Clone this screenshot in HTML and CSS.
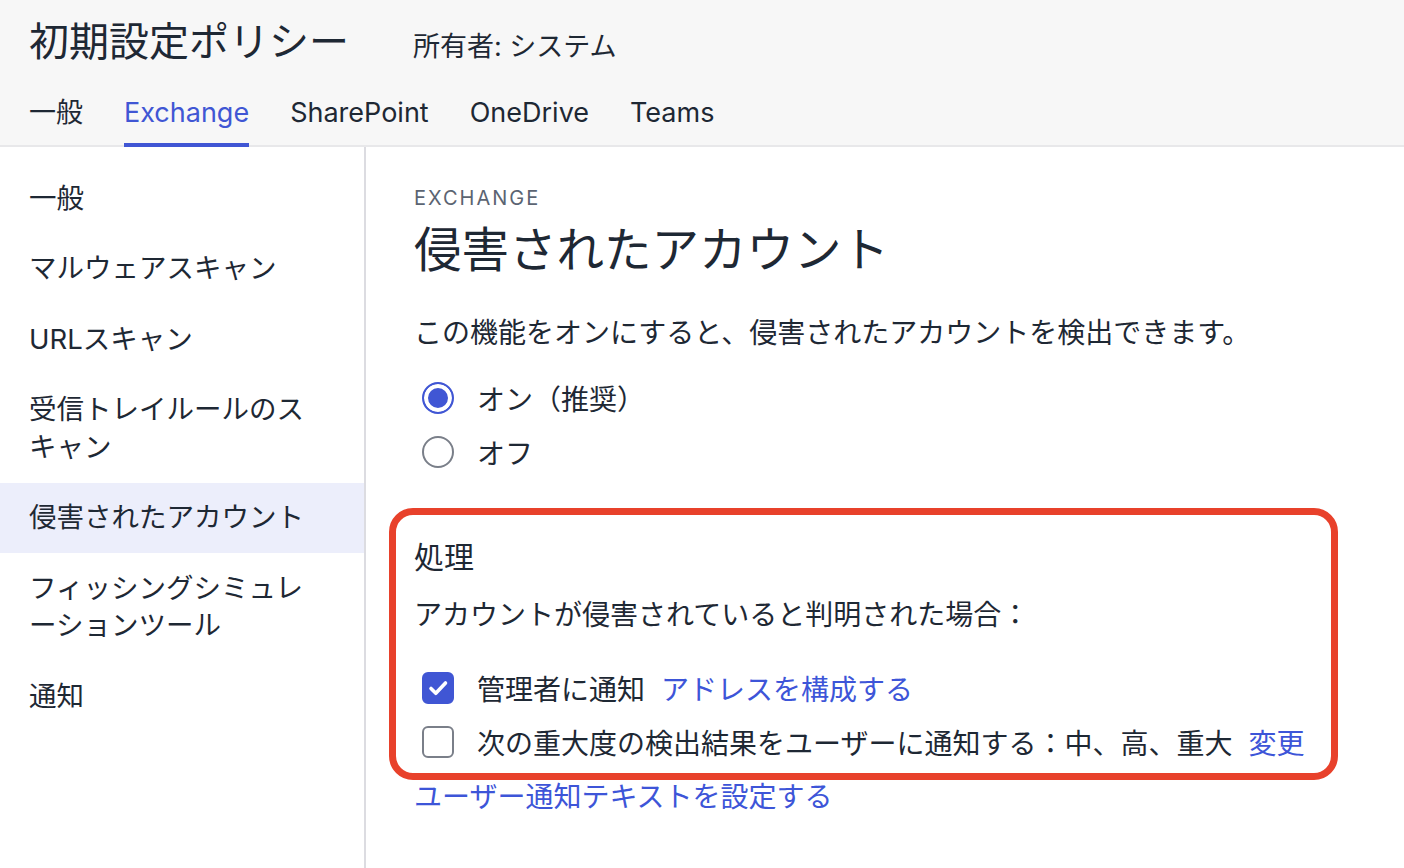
FILE: index.html
```html
<!DOCTYPE html>
<html lang="ja">
<head>
  <meta charset="UTF-8">
  <title>初期設定ポリシー</title>
  <link rel="stylesheet" href="styles.css">
</head>
<body>
  <header class="policy-header">
    <div class="title-row">
      <h1 class="policy-title">初期設定ポリシー</h1>
      <span class="policy-owner">所有者: システム</span>
    </div>
    <nav class="tabs">
      <a class="tab">一般</a>
      <a class="tab active">Exchange</a>
      <a class="tab">SharePoint</a>
      <a class="tab">OneDrive</a>
      <a class="tab">Teams</a>
    </nav>
  </header>

  <div class="layout">
    <aside class="sidebar">
      <a class="side-item">一般</a>
      <a class="side-item">マルウェアスキャン</a>
      <a class="side-item">URLスキャン</a>
      <a class="side-item">受信トレイルールのスキャン</a>
      <a class="side-item active">侵害されたアカウント</a>
      <a class="side-item">フィッシングシミュレーションツール</a>
      <a class="side-item">通知</a>
    </aside>

    <main class="content">
      <div class="eyebrow">EXCHANGE</div>
      <h2 class="page-title">侵害されたアカウント</h2>
      <p class="description">この機能をオンにすると、侵害されたアカウントを検出できます。</p>

      <div class="radio-group">
        <label class="option">
          <span class="radio checked"></span>
          <span>オン（推奨）</span>
        </label>
        <label class="option">
          <span class="radio"></span>
          <span>オフ</span>
        </label>
      </div>

      <section class="actions">
        <h3 class="section-title">処理</h3>
        <p class="section-text">アカウントが侵害されていると判明された場合：</p>
        <label class="option">
          <span class="checkbox checked">
            <svg viewBox="0 0 32 32" width="32" height="32"><path d="M9 16.5l4.8 4.8L23.5 11" fill="none" stroke="#fff" stroke-width="3.6" stroke-linecap="round" stroke-linejoin="round"/></svg>
          </span>
          <span>管理者に通知</span>
          <a class="link inline-link">アドレスを構成する</a>
        </label>
        <label class="option">
          <span class="checkbox"></span>
          <span>次の重大度の検出結果をユーザーに通知する：中、高、重大</span>
          <a class="link inline-link">変更</a>
        </label>
      </section>

      <a class="link block-link">ユーザー通知テキストを設定する</a>
    </main>
  </div>
</body>
</html>
```

FILE: styles.css
```css
html, body {
  height: 100%;
}

body {
  margin: 0;
  font-family: Inter, "Noto Sans CJK JP", sans-serif;
  font-size: 27.5px;
  color: #1e2834;
  background-color: #fff;
  display: flex;
  flex-direction: column;
}

a {
  cursor: pointer;
}

/* Header */
.policy-header {
  background-color: #f7f7f7;
  border-bottom: 2px solid #e8e8ea;
  padding: 17px 29px 0;
}

.title-row {
  display: flex;
  align-items: baseline;
  gap: 64px;
}

.policy-title {
  margin: 0;
  font-size: 40px;
  font-weight: 400;
  line-height: 50px;
}

.policy-owner {
  font-size: 27px;
}

.tabs {
  display: flex;
  gap: 41px;
  margin-top: 27px;
  margin-bottom: -2px;
  font-size: 27px;
}

.tab {
  line-height: 38px;
  padding-bottom: 11px;
  border-bottom: 4px solid transparent;
}

.tab.active {
  color: #4056d4;
  border-bottom-color: #4056d4;
}

/* Body layout */
.layout {
  flex: 1;
  display: flex;
}

.sidebar {
  width: 364px;
  flex-shrink: 0;
  border-right: 2px solid #dcdce1;
  padding-top: 16px;
  box-sizing: content-box;
}

.side-item {
  display: block;
  padding: 16.5px 44px 16.5px 29px;
  line-height: 37.5px;
}

.side-item.active {
  background-color: #eceefb;
}

.content {
  flex: 1;
  padding: 39px 48px 0;
  font-size: 28px;
}

.eyebrow {
  font-size: 20px;
  line-height: 24px;
  letter-spacing: 2px;
  color: #5b6472;
}

.page-title {
  margin: 10px 0 0;
  font-size: 47.5px;
  font-weight: 400;
  line-height: 60px;
}

.description {
  margin: 34px 0 0;
  line-height: 38px;
}

.radio-group {
  margin-top: 19px;
}

.option {
  display: flex;
  align-items: center;
  height: 54px;
  padding-left: 8px;
}

.radio {
  width: 28px;
  height: 28px;
  border: 2px solid #7a7f89;
  border-radius: 50%;
  margin-right: 23px;
  flex-shrink: 0;
}

.radio.checked {
  border-color: #4056d4;
  background-color: #4056d4;
  box-shadow: inset 0 0 0 4px #fff;
}

.checkbox {
  width: 28px;
  height: 28px;
  border: 2px solid #7a7f89;
  border-radius: 6px;
  margin-right: 23px;
  flex-shrink: 0;
  position: relative;
}

.checkbox.checked {
  border-color: #4056d4;
  background-color: #4056d4;
}

.checkbox svg {
  position: absolute;
  top: -2px;
  left: -2px;
}

/* Action section with highlight */
.actions {
  position: relative;
  margin-top: 57px;
}

.actions::after {
  content: "";
  position: absolute;
  top: -28px;
  left: -25px;
  right: 18px;
  bottom: -11px;
  border: 7px solid #e8412b;
  border-radius: 24px;
  pointer-events: none;
}

.section-title {
  margin: 0;
  font-size: 30px;
  font-weight: 400;
  line-height: 42px;
}

.section-text {
  margin: 18px 0 27px;
  line-height: 38px;
}

.link {
  color: #3d55d8;
}

.inline-link {
  margin-left: 16px;
}

.block-link {
  display: block;
  margin-top: 9px;
  line-height: 38px;
}
```
